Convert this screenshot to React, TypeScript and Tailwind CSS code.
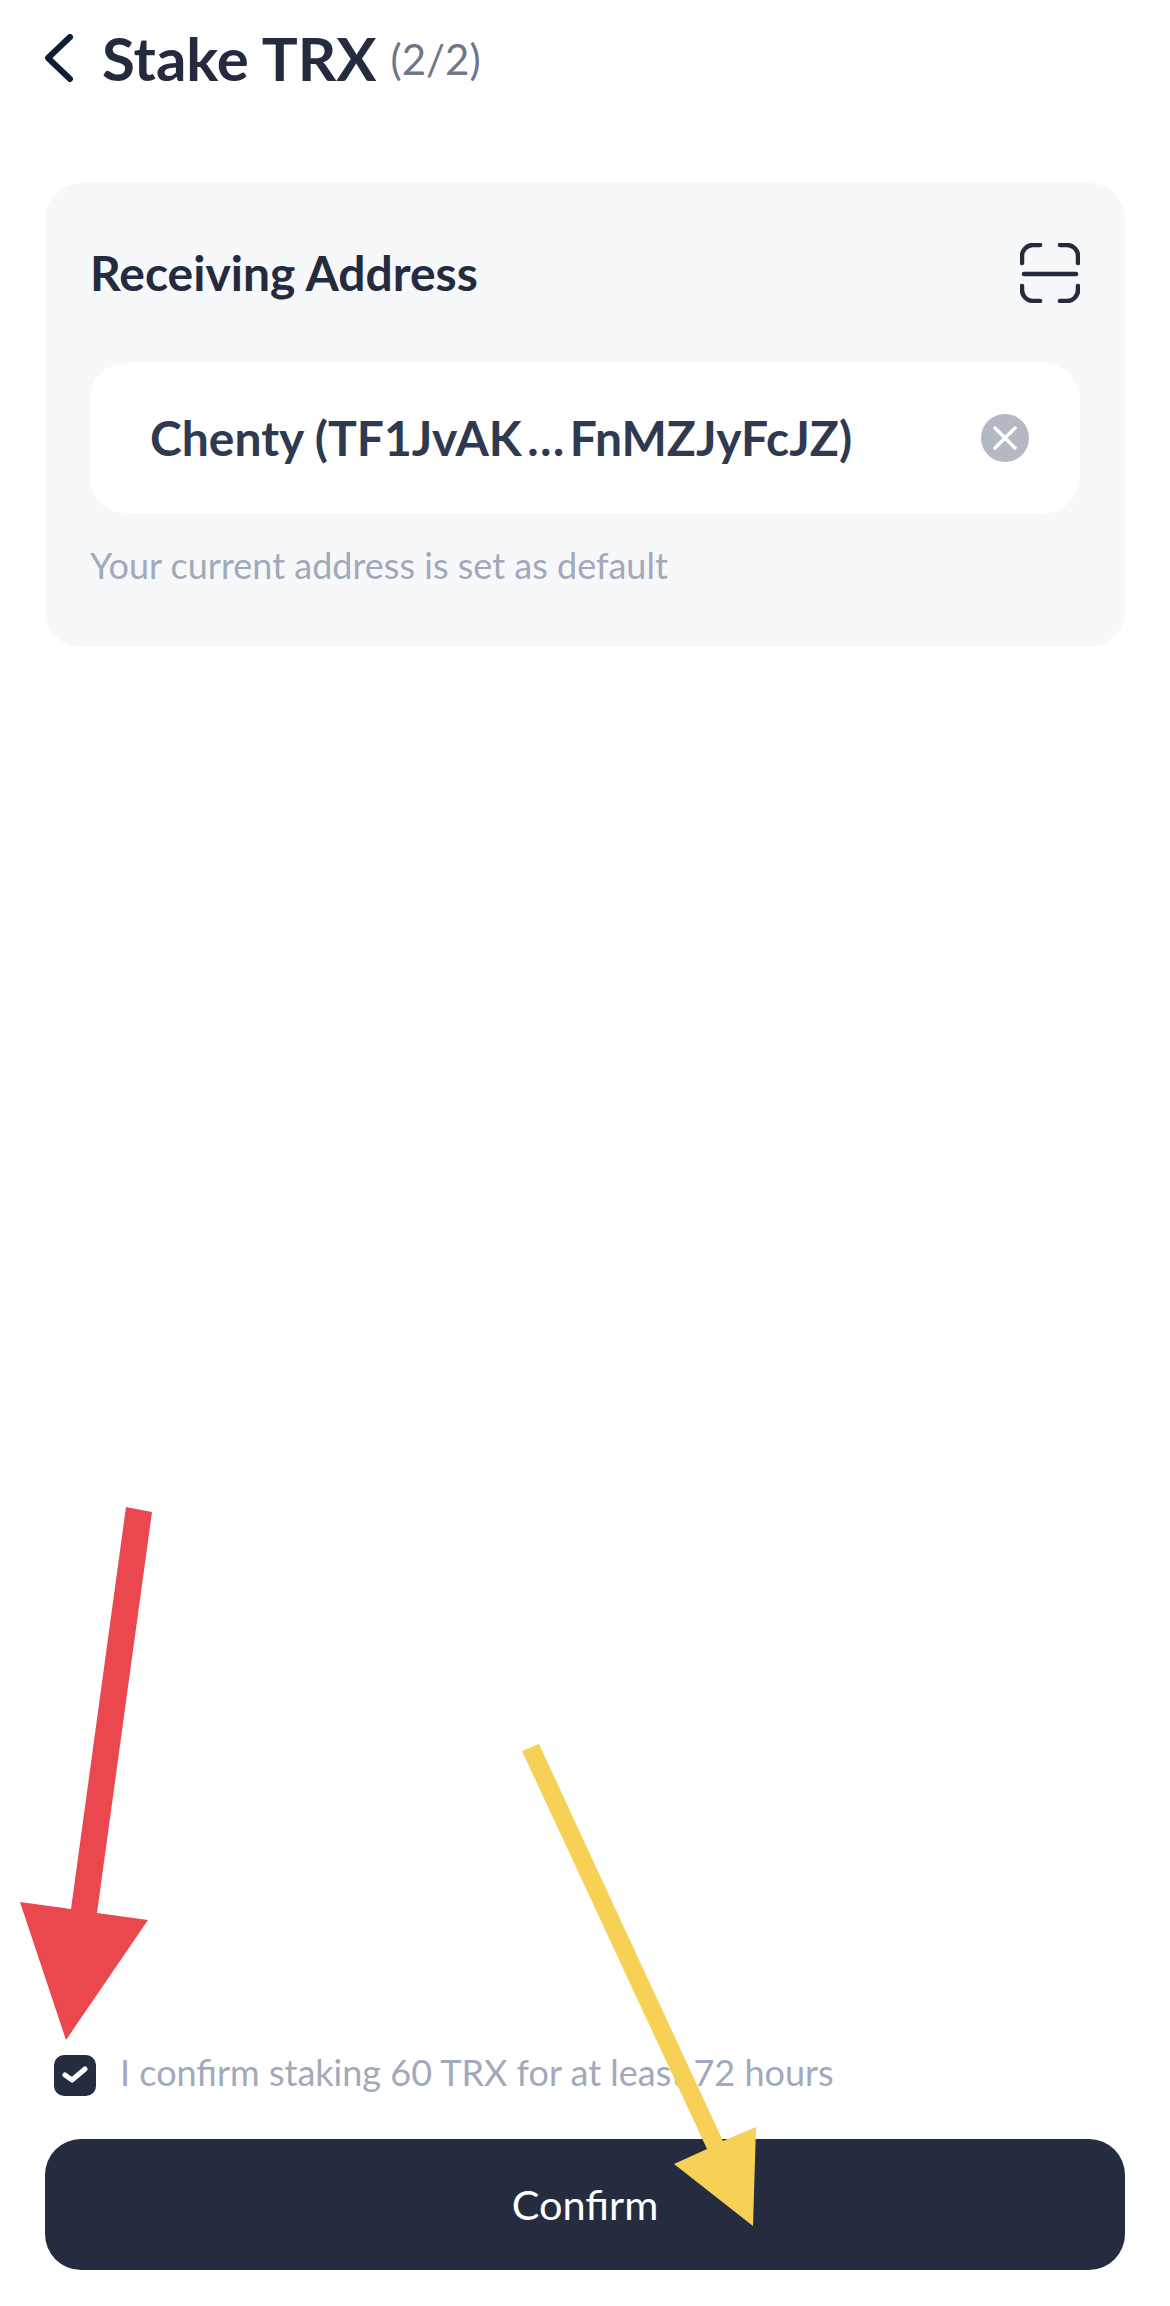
export default function App() {
  return (
    <div className="relative flex h-[2306px] w-[1170px] flex-col overflow-hidden bg-white font-['Lato','Noto_Sans',sans-serif] text-[#252b3f]">
      <header className="flex h-[115px] items-center pl-[45px]">
        <svg width="28" height="48" viewBox="0 0 28 48" fill="none" className="shrink-0">
          <path d="M25 3 L3 24 L25 45" stroke="#0f1d32" strokeWidth="6" strokeLinecap="round" strokeLinejoin="round" />
        </svg>
        <h1 className="ml-[29px] text-[60px] leading-none font-bold">Stake TRX</h1>
        <span className="ml-[14px] mt-[2px] text-[42px] leading-none text-[#6f7688]">(2/2)</span>
      </header>

      <section className="mx-[45px] mt-[68px] h-[464px] rounded-[36px] bg-[#f7f8fa] px-[45px] pt-[60px]">
        <div className="flex h-[60px] items-center justify-between">
          <h2 className="text-[48px] leading-none font-bold">Receiving Address</h2>
          <svg width="60" height="60" viewBox="0 0 60 60" fill="none">
            <path d="M20 2 H13 A11 11 0 0 0 2 13 V20 M40 2 H47 A11 11 0 0 1 58 13 V20 M2 43 V47 A11 11 0 0 0 13 58 H20 M58 43 V47 A11 11 0 0 1 47 58 H40" stroke="#252b3f" strokeWidth="4.5" strokeLinecap="round" />
            <path d="M4 31 H56" stroke="#252b3f" strokeWidth="4.5" strokeLinecap="round" />
          </svg>
        </div>
        <div className="mt-[60px] flex h-[150px] items-center justify-between rounded-[36px] bg-white pl-[60px] pr-[51px]">
          <span className="text-[48px] leading-none font-bold text-[#2f3a50]">
            Chenty (TF1JvAK<span className="px-[5.5px]">…</span>FnMZJyFcJZ)
          </span>
          <span className="flex h-[48px] w-[48px] items-center justify-center rounded-full bg-[#b4b8c4]">
            <svg width="24" height="24" viewBox="0 0 24 24" fill="none">
              <path d="M2 2 L22 22 M22 2 L2 22" stroke="#fff" strokeWidth="3.5" strokeLinecap="round" />
            </svg>
          </span>
        </div>
        <p className="mt-[34px] text-[36px] leading-none text-[#a1a9bc]">Your current address is set as default</p>
      </section>

      <div className="mt-auto flex items-center px-[54px] pb-[43px]">
        <span className="flex h-[41px] w-[42px] items-center justify-center rounded-[10px] bg-[#262c40]">
          <svg width="26" height="20" viewBox="0 0 26 20" fill="none">
            <path d="M3 10 L10 15 L23 4" stroke="#fff" strokeWidth="5" strokeLinecap="round" strokeLinejoin="round" />
          </svg>
        </span>
        <span className="ml-[24px] mb-[6px] text-[36px] leading-none text-[#a1a9bc]">I confirm staking 60 TRX for at least 72 hours</span>
      </div>
      <button className="mx-[45px] mb-[36px] flex h-[131px] items-center justify-center rounded-[36px] bg-[#262c40] text-[41.5px] text-white">
        Confirm
      </button>

      <svg className="pointer-events-none absolute left-0 top-0" width="1170" height="2306" viewBox="0 0 1170 2306">
        <polygon points="126,1507 152,1512 97,1913 148,1920 66,2040 20,1902 71,1909" fill="#ea474e" />
        <polygon points="522,1751 539,1744 723,2141 756,2127 753,2226 674,2164 707,2149" fill="#f7d155" />
      </svg>
    </div>
  );
}
